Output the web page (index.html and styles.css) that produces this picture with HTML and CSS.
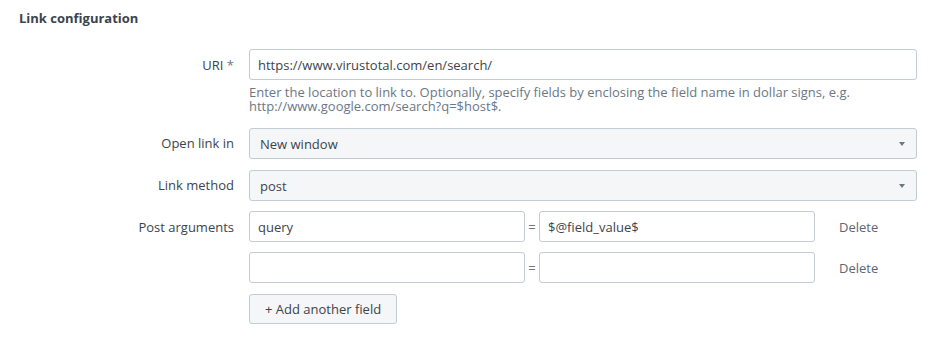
FILE: index.html
```html
<!DOCTYPE html>
<html>
	<head>
		<meta charset="UTF-8">
		<title>Link configuration</title>
		<link rel="stylesheet" href="styles.css">
	</head>
	<body>
		<section class="panel">
			<h3 class="title">Link configuration</h3>
			<div class="row">
				<label class="lbl">URI <span class="req">*</span></label>
				<div class="ctl">
					<input class="txt" type="text" value="https://www.virustotal.com/en/search/">
					<p class="help">Enter the location to link to. Optionally, specify fields by enclosing the field name in dollar signs, e.g. http://www.google.com/search?q=$host$.</p>
				</div>
			</div>
			<div class="row">
				<label class="lbl">Open link in</label>
				<div class="ctl">
					<div class="sel">New window<span class="caret"></span></div>
				</div>
			</div>
			<div class="row">
				<label class="lbl">Link method</label>
				<div class="ctl">
					<div class="sel">post<span class="caret"></span></div>
				</div>
			</div>
			<div class="row">
				<label class="lbl">Post arguments</label>
				<div class="ctl">
					<div class="args">
						<input class="txt" type="text" value="query">
						<span class="eq">=</span>
						<input class="txt" type="text" value="$@field_value$">
						<a class="del">Delete</a>
					</div>
					<div class="args">
						<input class="txt" type="text" value="">
						<span class="eq">=</span>
						<input class="txt" type="text" value="">
						<a class="del">Delete</a>
					</div>
					<button class="btn">+ Add another field</button>
				</div>
			</div>
		</section>
	</body>
</html>
```

FILE: styles.css
```css
body{
	margin:0;
	background:#fff;
	font-family:"Open Sans", Lato, sans-serif;
	font-size:13px;
	color:#3c444d;
}
.panel{
	padding:10px 17px 0 19px;
}
.title{
	margin:0 0 22px;
	font-size:13px;
	font-weight:bold;
	line-height:17px;
}
.row{
	display:flex;
	margin-bottom:10px;
}
.lbl{
	width:215px;
	flex:none;
	text-align:right;
	padding-right:15px;
	line-height:32px;
}
.req{
	color:#6b7785;
}
.ctl{
	flex:1;
	min-width:0;
}
.txt{
	display:block;
	box-sizing:border-box;
	width:100%;
	height:31px;
	margin:0;
	padding:0 8px;
	border:1px solid #c3cbd4;
	border-radius:3px;
	background:#fff;
	font:13px "Open Sans", Lato, sans-serif;
	color:#3c444d;
}
.help{
	margin:5px 0 4px;
	font-size:13px;
	line-height:14px;
	color:#6b7785;
}
.sel{
	position:relative;
	box-sizing:border-box;
	height:31px;
	margin-top:1px;
	padding:0 10px;
	line-height:30px;
	border:1px solid #c3cbd4;
	border-radius:3px;
	background:#f5f6f8;
}
.caret{
	position:absolute;
	right:11px;
	top:13px;
	border-left:3px solid transparent;
	border-right:3px solid transparent;
	border-top:4px solid #6b7785;
}
.args{
	display:flex;
	align-items:center;
	margin-bottom:10px;
}
.args .txt{
	width:276px;
	flex:none;
}
.eq{
	width:14px;
	text-align:center;
	color:#6b7785;
}
.del{
	margin-left:24px;
	color:#5c6773;
}
.btn{
	height:30px;
	padding:0 15px;
	margin-top:1px;
	border:1px solid #c3cbd4;
	border-radius:3px;
	background:#f5f6f8;
	font:13px "Open Sans", Lato, sans-serif;
	color:#3c444d;
}
```
